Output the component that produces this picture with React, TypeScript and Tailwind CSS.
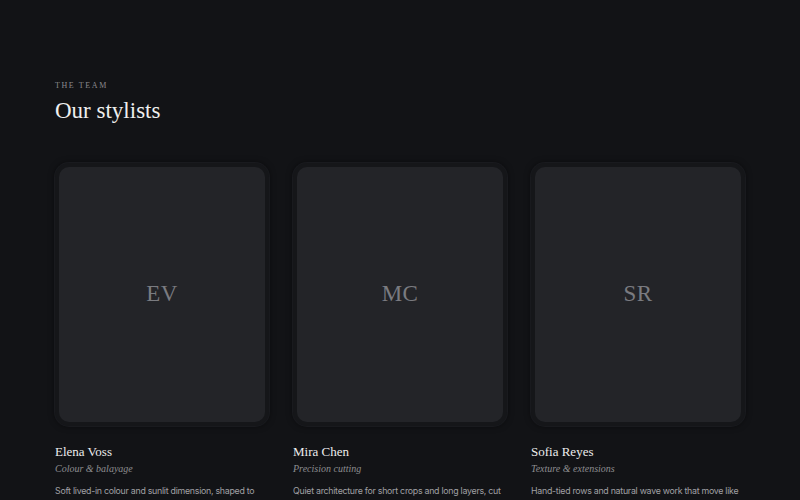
import React from "react";

const serif = { fontFamily: '"Liberation Serif", "DejaVu Serif", Georgia, serif' };
const sans = { fontFamily: 'Inter, "Liberation Sans", sans-serif' };

type Stylist = {
  initials: string;
  name: string;
  role: string;
  bio: string;
};

const team: Stylist[] = [
  {
    initials: "EV",
    name: "Elena Voss",
    role: "Colour & balayage",
    bio: "Soft lived-in colour and sunlit dimension, shaped to grow out beautifully between visits.",
  },
  {
    initials: "MC",
    name: "Mira Chen",
    role: "Precision cutting",
    bio: "Quiet architecture for short crops and long layers, cut to fall into place on its own.",
  },
  {
    initials: "SR",
    name: "Sofia Reyes",
    role: "Texture & extensions",
    bio: "Hand-tied rows and natural wave work that move like your own hair, every single day.",
  },
];

function StylistCard({ s }: { s: Stylist }) {
  return (
    <div className="flex flex-col">
      {/* framed portrait placeholder with initials */}
      <div className="rounded-[14px] bg-[#151619] p-[4px] shadow-[0_0_6px_rgba(0,0,0,0.55)] ring-1 ring-[#191a1e]">
        <div className="flex h-[255px] items-center justify-center rounded-[10px] bg-[#232428]">
          <span className="text-[23px] tracking-[0.02em] text-[#7a7b80]" style={serif}>
            {s.initials}
          </span>
        </div>
      </div>
      <h3 className="mt-[17px] text-[13px] leading-[18px] text-[#ededed]" style={serif}>
        {s.name}
      </h3>
      <p className="mt-[1px] text-[10px] italic leading-[14px] text-[#8d8d90]" style={serif}>
        {s.role}
      </p>
      <p className="mt-[7px] text-[8.8px] leading-[16px] tracking-[-0.03em] text-[#a0a0a4]" style={sans}>
        {s.bio}
      </p>
    </div>
  );
}

export default function App() {
  return (
    <div className="h-[500px] w-[800px] overflow-hidden bg-[#121316] px-[55px] pt-[81px]">
      <p className="text-[8px] uppercase leading-[10px] tracking-[0.2em] text-[#8a8a8e]" style={serif}>
        The Team
      </p>
      <h2 className="mt-[6px] text-[23px] leading-[28px] text-[#efefef]" style={serif}>
        Our stylists
      </h2>
      <div className="mt-[38px] grid grid-cols-3 gap-[24px]">
        {team.map((s) => (
          <StylistCard key={s.initials} s={s} />
        ))}
      </div>
    </div>
  );
}
